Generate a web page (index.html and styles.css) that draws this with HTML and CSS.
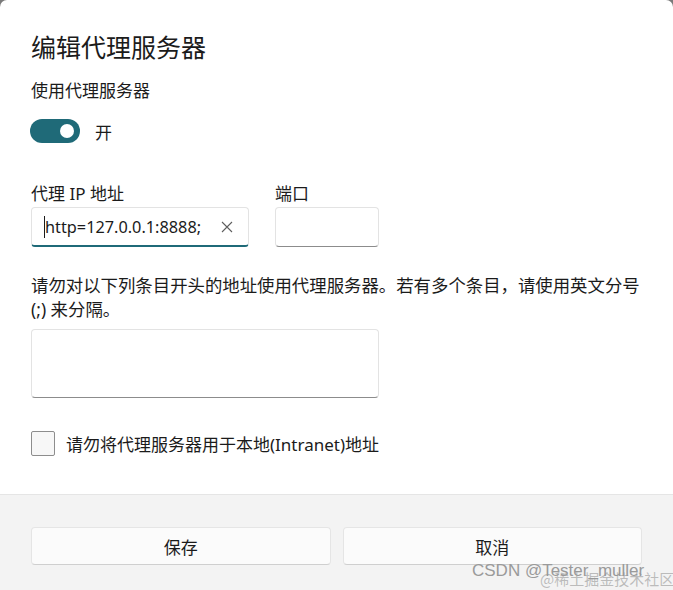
FILE: index.html
```html
<!DOCTYPE html>
<html lang="zh-CN">
<head>
    <meta charset="UTF-8">
    <meta name="viewport" content="width=device-width, initial-scale=1.0">
    <title>编辑代理服务器</title>
    <link rel="stylesheet" href="styles.css">
</head>
<body>
    <div class="dialog">
        <div class="content">
            <h1 class="title">编辑代理服务器</h1>
            <div class="label">使用代理服务器</div>
            <div class="toggle-row">
                <span class="toggle"><span class="thumb"></span></span>
                <span class="toggle-text">开</span>
            </div>

            <div class="fields">
                <div class="field">
                    <div class="label">代理 IP 地址</div>
                    <div class="input input-ip">
                        <span class="caret"></span>
                        <span class="value">http=127.0.0.1:8888;</span>
                        <svg class="clear" width="12" height="12" viewBox="0 0 12 12">
                            <path d="M1 1 L11 11 M11 1 L1 11" stroke="#5f5f5f" stroke-width="1.1" fill="none"/>
                        </svg>
                    </div>
                </div>
                <div class="field">
                    <div class="label">端口</div>
                    <div class="input input-port"></div>
                </div>
            </div>

            <p class="desc">请勿对以下列条目开头的地址使用代理服务器。若有多个条目，请使用英文分号 (;) 来分隔。</p>
            <div class="textarea"></div>

            <div class="check-row">
                <span class="checkbox"></span>
                <span class="check-text">请勿将代理服务器用于本地(Intranet)地址</span>
            </div>
        </div>

        <div class="footer">
            <button class="btn">保存</button>
            <button class="btn">取消</button>
        </div>

        <div class="watermark">CSDN @Tester_muller</div>
        <div class="watermark2">@稀土掘金技术社区</div>
    </div>
</body>
</html>
```

FILE: styles.css
```css
html, body {
    margin: 0;
    height: 100%;
}
body {
    background: #7a7a7a;
    font-family: "Noto Sans", "Noto Sans CJK SC", sans-serif;
    color: #1b1b1b;
}
.dialog {
    position: relative;
    width: 673px;
    height: 590px;
    background: #fff;
    border-radius: 7px 7px 0 0;
    display: flex;
    flex-direction: column;
    overflow: hidden;
}
.content {
    flex-grow: 1;
    padding: 30px 24px 0 31px;
}
.title {
    margin: 0;
    font-size: 25px;
    font-weight: normal;
    line-height: 34px;
}
.label {
    font-size: 17px;
    line-height: 24px;
}
.content > .label {
    margin-top: 15px;
}
.toggle-row {
    display: flex;
    align-items: center;
    margin-top: 16px;
    height: 24px;
}
.toggle {
    position: relative;
    width: 50px;
    height: 24px;
    border-radius: 12px;
    background: #1f6a78;
    margin-left: -1px;
}
.thumb {
    position: absolute;
    top: 5px;
    right: 6px;
    width: 14px;
    height: 14px;
    border-radius: 50%;
    background: #fff;
}
.toggle-text {
    margin-left: 15px;
    font-size: 17px;
}
.fields {
    display: flex;
    gap: 26px;
    margin-top: 39px;
}
.input {
    box-sizing: border-box;
    height: 40px;
    margin-top: 1px;
    border: 1px solid #e3e3e3;
    border-bottom: 1px solid #8c8c8c;
    border-radius: 4px;
    background: #fff;
}
.input-ip {
    width: 218px;
    display: flex;
    align-items: center;
    padding-left: 12px;
    border-bottom: 2px solid #1f6a78;
}
.input-port {
    width: 104px;
}
.caret {
    width: 1px;
    height: 22px;
    background: #1b1b1b;
}
.value {
    font-size: 16.3px;
}
.clear {
    margin-left: auto;
    margin-right: 15px;
}
.desc {
    margin: 26px 0 0;
    font-size: 17.4px;
    line-height: 24px;
}
.textarea {
    box-sizing: border-box;
    width: 348px;
    height: 69px;
    margin-top: 8px;
    border: 1px solid #e3e3e3;
    border-bottom: 1px solid #8c8c8c;
    border-radius: 4px;
}
.check-row {
    display: flex;
    align-items: center;
    margin-top: 33px;
}
.checkbox {
    box-sizing: border-box;
    width: 24px;
    height: 25px;
    border: 1px solid #8d8d8d;
    border-radius: 2px;
    background: #f7f7f7;
}
.check-text {
    margin-left: 11px;
    font-size: 17px;
}
.footer {
    height: 96px;
    box-sizing: border-box;
    background: #f3f3f3;
    border-top: 1px solid #e5e5e5;
    padding: 32px 31px 0;
    display: flex;
    gap: 12px;
}
.btn {
    width: 300px;
    height: 38px;
    border: 1px solid #e5e5e5;
    border-bottom-color: #cfcfcf;
    border-radius: 4px;
    background: #fbfbfb;
    font-family: inherit;
    font-size: 17px;
    color: #1b1b1b;
}
.watermark {
    position: absolute;
    left: 472px;
    top: 561px;
    font-family: "Liberation Sans", sans-serif;
    font-size: 17px;
    color: #9a9a9a;
    white-space: nowrap;
}
.watermark2 {
    position: absolute;
    left: 540px;
    top: 568px;
    font-family: "Noto Sans CJK SC", sans-serif;
    font-size: 15px;
    color: rgba(150, 150, 150, 0.6);
    white-space: nowrap;
}
```
